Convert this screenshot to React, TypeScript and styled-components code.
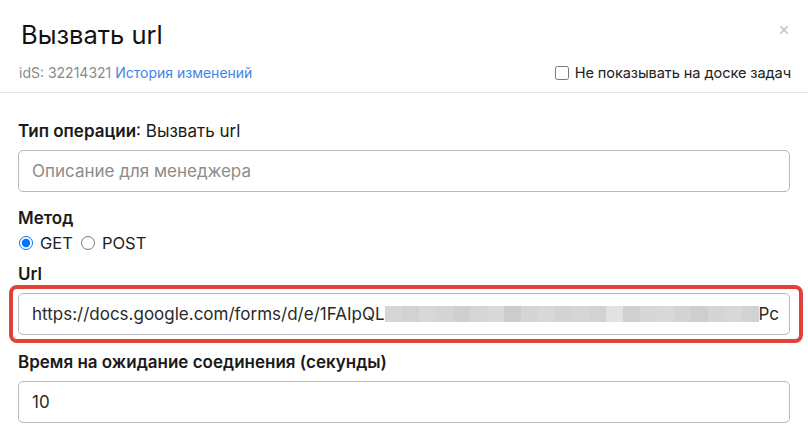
import styled, { createGlobalStyle } from 'styled-components';

const BLUR_SHADES = [
  '#d6d6d6', '#d2d2d2', '#d8d8d8', '#d4d4d4', '#cfcfcf', '#d6d6d6',
  '#d9d9d9', '#cccccc', '#d5d5d5', '#d8d8d8', '#d3d3d3', '#d6d6d6',
  '#d2d2d2', '#e2e2e2', '#d0d0d0', '#d7d7d7', '#d9d9d9', '#d3d3d3',
  '#cecece', '#d5d5d5', '#d8d8d8', '#d2d2d2',
];

const GlobalStyle = createGlobalStyle`
  * { box-sizing: border-box; }
  body {
    margin: 0;
    background: #fff;
    font-family: Inter, "Noto Sans", sans-serif;
    color: #1f1f1f;
  }
`;

const Modal = styled.div`
  width: 808px;
  height: 430px;
  overflow: hidden;
  background: #fff;
`;

const Header = styled.div`
  position: relative;
  padding: 20px 17px 0 19px;
  border-bottom: 1px solid #e3e3e3;
`;

const Title = styled.h1`
  margin: 0 0 0 2px;
  font-size: 25.5px;
  font-weight: 400;
  line-height: 30px;
  color: #111;
`;

const Close = styled.span`
  position: absolute;
  top: 19px;
  right: 18px;
  font-size: 18px;
  color: #c4c4c4;
  line-height: 20px;
`;

const MetaRow = styled.div`
  display: flex;
  align-items: center;
  justify-content: space-between;
  height: 34px;
  margin-top: 8px;
  padding-bottom: 5px;
`;

const Meta = styled.div`
  font-size: 14px;
  color: #8a8a8a;
`;

const HistoryLink = styled.a`
  color: #3f83ea;
  text-decoration: none;
`;

const CheckLabel = styled.label`
  display: flex;
  align-items: center;
  gap: 6px;
  font-size: 14.6px;
  color: #222;
  letter-spacing: -0.1px;

  input {
    margin: 0;
    width: 14px;
    height: 14px;
  }
`;

const Body = styled.div`
  padding: 28px 18px 0 18px;
  display: flex;
  flex-direction: column;
`;

const Label = styled.div<{ $gap?: number }>`
  font-size: 17px;
  line-height: 20px;
  font-weight: 600;
  color: #1a1a1a;
  margin-top: ${({ $gap }) => $gap ?? 0}px;

  span {
    font-weight: 400;
  }
`;

const Input = styled.div<{ $placeholder?: boolean }>`
  margin-top: 9px;
  height: 42px;
  border: 1px solid #b9b8c2;
  border-radius: 5px;
  padding: 0 13px;
  display: flex;
  align-items: center;
  font-size: 17px;
  color: ${({ $placeholder }) => ($placeholder ? '#8c8c8c' : '#2a2a2a')};
  white-space: nowrap;
  overflow: hidden;
`;

const Highlight = styled.div`
  position: relative;
  margin-top: 9px;

  ${Input} {
    margin-top: 0;
  }
`;

const Frame = styled.div`
  position: absolute;
  top: -8px;
  bottom: -8px;
  left: -9px;
  right: -13px;
  border: 4px solid #e2403a;
  border-radius: 8px;
  pointer-events: none;
`;

const Blur = styled.span`
  display: inline-flex;
  height: 16px;
`;

const BlurCell = styled.span`
  width: 17px;
  height: 16px;
`;

const RadioRow = styled.div`
  display: flex;
  align-items: center;
  gap: 7px;
  height: 20px;
  margin-top: 5px;
  font-size: 16.5px;
  color: #222;
`;

const Radio = styled.label`
  display: flex;
  align-items: center;
  gap: 7px;

  input {
    margin: 0 0 0 1px;
    width: 14px;
    height: 14px;
  }
`;

export default function App() {
  return (
    <Modal>
      <GlobalStyle />
      <Header>
        <Title>Вызвать url</Title>
        <Close>×</Close>
        <MetaRow>
          <Meta>
            idS: 32214321 <HistoryLink href="#">История изменений</HistoryLink>
          </Meta>
          <CheckLabel>
            <input type="checkbox" />
            Не показывать на доске задач
          </CheckLabel>
        </MetaRow>
      </Header>
      <Body>
        <Label>
          Тип операции<span>: Вызвать url</span>
        </Label>
        <Input $placeholder>Описание для менеджера</Input>

        <Label $gap={16}>Метод</Label>
        <RadioRow>
          <Radio>
            <input type="radio" name="method" defaultChecked />
            GET
          </Radio>
          <Radio>
            <input type="radio" name="method" />
            POST
          </Radio>
        </RadioRow>

        <Label $gap={11}>Url</Label>
        <Highlight>
          <Input>
            https://docs.google.com/forms/d/e/1FAIpQL
            <Blur>
              {BLUR_SHADES.map((c, i) => (
                <BlurCell key={i} style={{ background: c }} />
              ))}
            </Blur>
            Pc
          </Input>
          <Frame />
        </Highlight>

        <Label $gap={17}>Время на ожидание соединения (секунды)</Label>
        <Input>10</Input>
      </Body>
    </Modal>
  );
}
